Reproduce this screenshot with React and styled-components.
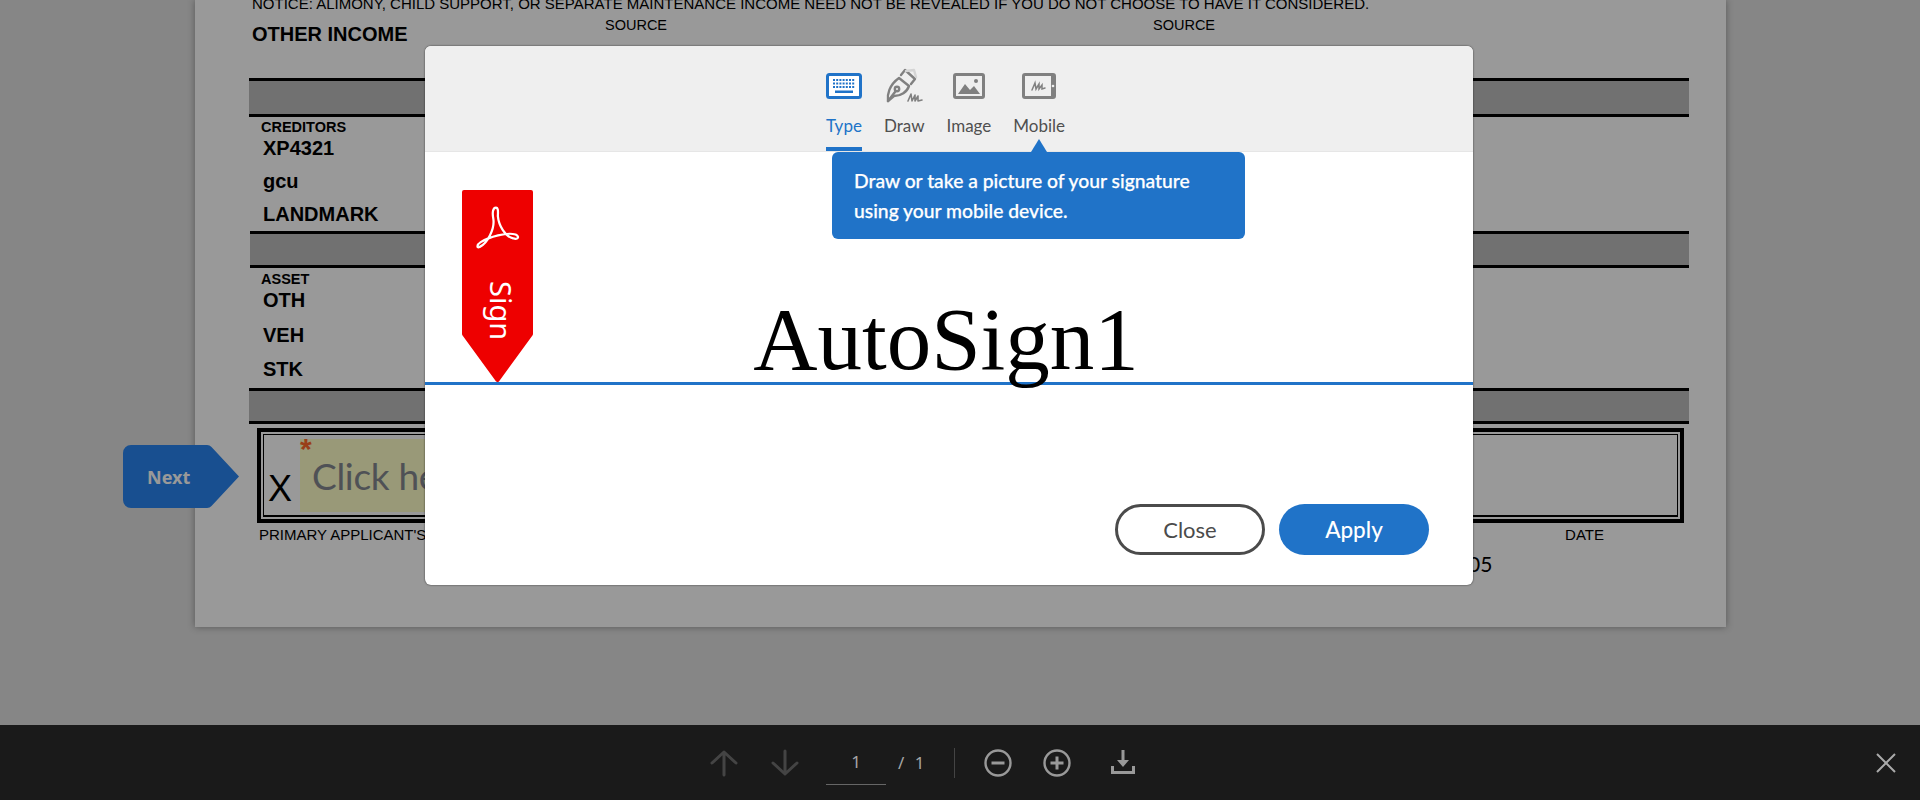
import React from 'react';
import styled, { createGlobalStyle } from 'styled-components';

const GlobalStyle = createGlobalStyle`
    html, body { margin: 0; padding: 0; height: 100%; overflow: hidden; }
    body { font-family: "Liberation Sans", Arial, sans-serif; }
    * { box-sizing: border-box; }
`;

const Screen = styled.div`
    display: flex;
    flex-direction: column;
    width: 1920px;
    height: 800px;
    overflow: hidden;
`;

const Viewer = styled.div`
    position: relative;
    flex: 1;
    padding-left: 195px;
    background: #dfdfdf;
    overflow: hidden;
`;

const Backdrop = styled.div`
    position: absolute;
    inset: 0;
    background: rgba(0, 0, 0, 0.4);
`;

/* pdf page */
const Page = styled.div`
    width: 1531px;
    height: 627px;
    padding: 0 37px 0 54px;
    background: #fff;
    box-shadow: 0 0 7px rgba(0, 0, 0, 0.35);
    color: #000;
    overflow: hidden;
`;

const Notice = styled.div`
    height: 10px;
    margin: -3px 0 0 3px;
    font-size: 15px;
    line-height: 14px;
    white-space: nowrap;
`;

const IncomeRow = styled.div`
    display: grid;
    grid-template-columns: 353px 548px 1fr;
    height: 71px;
    margin-left: 3px;
    padding-top: 10px;
`;

const IncomeTitle = styled.div`
    margin-top: 5px;
    font-size: 20px;
    font-weight: 700;
    line-height: 24px;
`;

const SourceLabel = styled.div`
    font-size: 14.5px;
    line-height: 16px;
`;

const Bar = styled.div`
    height: ${(p) => p.$height}px;
    margin-left: ${(p) => p.$inset || 0}px;
    background: #bcbcbc;
    border-top: 3px solid #000;
    border-bottom: 3px solid #000;
`;

const ListLabel = styled.div`
    height: ${(p) => p.$height}px;
    padding: ${(p) => p.$top}px 0 0 12px;
    font-size: 14.5px;
    font-weight: 700;
    line-height: 12px;
`;

const ListItems = styled.div`
    height: ${(p) => p.$height}px;
`;

const ListItem = styled.div`
    height: ${(p) => p.$height}px;
    padding-left: 14px;
    font-size: 20px;
    font-weight: 700;
    line-height: ${(p) => p.$height}px;
`;

const SignBox = styled.div`
    height: 95px;
    margin: 4px 5px 0 8px;
    padding: 2px;
    border: 4px solid #000;
`;

const SignBoxInner = styled.div`
    display: flex;
    height: 100%;
    padding: 4px 0 3px 4px;
    border: 1px solid #000;
    border-bottom-width: 2px;
`;

const SignX = styled.div`
    align-self: flex-end;
    width: 32px;
    margin-bottom: 2px;
    font-size: 36px;
    line-height: 42px;
`;

const SignField = styled.div`
    position: relative;
    flex: 0 0 900px;
    padding-left: 12px;
    background: #ffffc8;
    color: #84888f;
    font-family: Lato, sans-serif;
    font-size: 37px;
    letter-spacing: -0.3px;
    line-height: 74px;
`;

const Required = styled.span`
    position: absolute;
    top: -5px;
    left: 0;
    color: #ff6a2a;
    font-family: "Liberation Sans", sans-serif;
    font-size: 30px;
    font-weight: 700;
    line-height: 30px;
`;

const CaptionRow = styled.div`
    display: flex;
    justify-content: space-between;
    margin-top: 4px;
    padding: 0 85px 0 10px;
    font-size: 15px;
    line-height: 16px;
`;

const DateValue = styled.div`
    margin: 8px 0 0 1219px;
    font-family: Lato, sans-serif;
    font-size: 21px;
    line-height: 26px;
`;

/* next tag */
const NextTag = styled.div`
    position: absolute;
    top: 445px;
    left: 123px;
    display: flex;
    align-items: center;
    width: 117px;
    height: 63px;
    padding-left: 24px;
    color: #fff;
    font-family: "Noto Sans", sans-serif;
    font-size: 18px;
    font-weight: 700;

    svg {
        position: absolute;
        inset: 0;
    }
`;

const NextText = styled.span`
    position: relative;
`;

/* signature dialog */
const Dialog = styled.div`
    position: absolute;
    top: 46px;
    left: 425px;
    display: flex;
    flex-direction: column;
    width: 1048px;
    height: 539px;
    background: #fff;
    border-radius: 6px;
    box-shadow: 0 0 2px rgba(0, 0, 0, 0.7);
    font-family: Lato, sans-serif;
`;

const DialogHeader = styled.div`
    display: flex;
    justify-content: center;
    gap: 22px;
    height: 106px;
    padding: 22px 7px 0 0;
    background: #efefef;
    border-radius: 6px 6px 0 0;
    border-bottom: 1px solid #e6e6e6;
`;

const Tab = styled.div`
    display: flex;
    flex-direction: column;
    align-items: center;
    height: 83px;
    border-bottom: 4px solid ${(p) => (p.$active ? '#2073c8' : 'transparent')};
    color: ${(p) => (p.$active ? '#2073c8' : '#505050')};
    font-size: 17px;
    line-height: 22px;
`;

const TabIcon = styled.div`
    display: flex;
    align-items: center;
    justify-content: center;
    height: 36px;
    margin-bottom: 11px;
`;

const Tooltip = styled.div`
    position: absolute;
    top: 106px;
    left: 407px;
    width: 413px;
    height: 87px;
    padding: 14px 0 0 22px;
    background: #2073c8;
    border-radius: 6px;
    color: #fff;
    font-size: 19.3px;
    font-weight: 500;
    line-height: 30px;
    -webkit-text-stroke: 0.25px #fff;

    &:before {
        content: '';
        position: absolute;
        top: -13px;
        left: 199px;
        border-left: 8px solid transparent;
        border-right: 8px solid transparent;
        border-bottom: 13px solid #2073c8;
    }
`;

const SignArea = styled.div`
    position: relative;
    display: flex;
    justify-content: center;
    align-items: flex-end;
    height: 233px;
    padding-right: 6px;
    border-bottom: 3px solid #2073c8;
`;

const SignedName = styled.div`
    margin-bottom: -2px;
    color: #000;
    font-family: "Liberation Serif", serif;
    font-size: 89px;
    line-height: 89px;
`;

const SignRibbon = styled.div`
    position: absolute;
    top: 38px;
    left: 37px;
    width: 71px;
    height: 192px;

    > svg:first-child {
        position: absolute;
        inset: 0;
    }
`;

const RibbonLogo = styled.svg`
    position: absolute;
    top: 15px;
    left: 13px;
`;

const RibbonText = styled.span`
    position: absolute;
    top: 91px;
    left: 20px;
    color: #fff;
    font-family: "Noto Sans", sans-serif;
    font-size: 29px;
    line-height: 38px;
    writing-mode: vertical-rl;
`;

const DialogFooter = styled.div`
    display: flex;
    justify-content: flex-end;
    align-items: flex-end;
    gap: 14px;
    flex: 1;
    padding: 0 44px 30px 0;
`;

const PillButton = styled.button`
    width: 150px;
    height: 51px;
    padding: 0;
    background: ${(p) => (p.$primary ? '#2073c8' : '#fff')};
    border: ${(p) => (p.$primary ? 'none' : '3px solid #4b4b4b')};
    border-radius: 26px;
    color: ${(p) => (p.$primary ? '#fff' : '#4b4b4b')};
    font-family: Lato, sans-serif;
    font-size: ${(p) => (p.$primary ? 22.5 : 22)}px;
    font-weight: ${(p) => (p.$primary ? 500 : 400)};
`;

/* bottom toolbar */
const Toolbar = styled.div`
    display: flex;
    align-items: center;
    flex: 0 0 75px;
    padding: 0 23px 0 710px;
    background: #1a1a1a;
    color: #999;
`;

const ToolIcon = styled.svg`
    display: block;
    margin-right: ${(p) => p.$gap}px;
    flex: none;
`;

const PageInput = styled.div`
    width: 60px;
    height: 44px;
    margin-top: 1px;
    border-bottom: 1px solid #666;
    color: #a6a6a6;
    font-family: "Noto Sans", sans-serif;
    font-size: 17px;
    line-height: 42px;
    text-align: center;
`;

const PageCount = styled.div`
    width: 68px;
    padding-left: 12px;
    color: #a6a6a6;
    font-family: "Noto Sans", sans-serif;
    font-size: 17px;
    word-spacing: 6px;
`;

const ToolDivider = styled.div`
    width: 1px;
    height: 30px;
    margin-right: 29px;
    background: #444;
`;

const ToolSpacer = styled.div`
    flex: 1;
`;

const KeyboardIcon = () => (
    <svg width="36" height="26" viewBox="0 0 36 26">
        <rect x="1.500" y="1.500" width="33" height="23" rx="2" fill="#fff" stroke="#2073c8" strokeWidth="3" />
        <path d="M7 7h22M7 10.500h22M7 14h22" stroke="#2073c8" strokeWidth="2" strokeDasharray="2 1.2" />
        <rect x="9" y="17.500" width="18" height="2.500" fill="#2073c8" />
    </svg>
);

const PenIcon = () => (
    <svg width="38" height="36" viewBox="0 0 38 36" fill="none" stroke="#808080" strokeWidth="2.4" strokeLinecap="round" strokeLinejoin="round">
        <path d="M14 10 L24 18 C22 24 16 28 9 28 L3 33 C2 27 4 17 14 10Z" />
        <path d="M3 33 L10 24" />
        <circle cx="12" cy="21" r="2.2" />
        <path d="M16 7 L20 2 L30 11 L26 16" />
        <path d="M21 3 L29 2 L31 9" stroke="#d4d4d4" />
        <path d="M23 33 L26 26 L27 33 L30 27 L30 33 L33 28 L33 33 L37 32" strokeWidth="1.6" />
    </svg>
);

const ImageIcon = () => (
    <svg width="32" height="26" viewBox="0 0 32 26">
        <rect x="1.500" y="1.500" width="29" height="23" rx="1.500" fill="none" stroke="#808080" strokeWidth="3" />
        <path d="M5 21 L12 11 L17 17 L21 13 L27 21Z" fill="#808080" />
        <circle cx="23" cy="8" r="2" fill="#808080" />
    </svg>
);

const MobileIcon = () => (
    <svg width="34" height="26" viewBox="0 0 34 26">
        <rect x="1.500" y="1.500" width="31" height="23" rx="1.500" fill="none" stroke="#808080" strokeWidth="3" />
        <rect x="29" y="2" width="4" height="22" fill="#808080" />
        <circle cx="31" cy="13" r="1.300" fill="#efefef" />
        <path d="M10 17 L13 10 L14 16 L17 11 L17 16 L20 12 L20 16 L23 15" fill="none" stroke="#808080" strokeWidth="1.500" strokeLinecap="round" />
    </svg>
);

const tabs = [
    { name: 'Type', icon: <KeyboardIcon />, active: true },
    { name: 'Draw', icon: <PenIcon /> },
    { name: 'Image', icon: <ImageIcon /> },
    { name: 'Mobile', icon: <MobileIcon /> }
];

const creditors = ['XP4321', 'gcu', 'LANDMARK'];
const assets = ['OTH', 'VEH', 'STK'];

export default () => {
    return (
        <Screen>
            <GlobalStyle />
            <Viewer>
                <Page>
                    <Notice>NOTICE: ALIMONY, CHILD SUPPORT, OR SEPARATE MAINTENANCE INCOME NEED NOT BE REVEALED IF YOU DO NOT CHOOSE TO HAVE IT CONSIDERED.</Notice>
                    <IncomeRow>
                        <IncomeTitle>OTHER INCOME</IncomeTitle>
                        <SourceLabel>SOURCE</SourceLabel>
                        <SourceLabel>SOURCE</SourceLabel>
                    </IncomeRow>
                    <Bar $height={39} />
                    <ListLabel $height={15} $top={4}>CREDITORS</ListLabel>
                    <ListItems $height={99}>
                        {creditors.map((name) => (
                            <ListItem key={name} $height={33}>{name}</ListItem>
                        ))}
                    </ListItems>
                    <Bar $height={37} $inset={1} />
                    <ListLabel $height={15} $top={5}>ASSET</ListLabel>
                    <ListItems $height={105}>
                        {assets.map((name) => (
                            <ListItem key={name} $height={34.5}>{name}</ListItem>
                        ))}
                    </ListItems>
                    <Bar $height={36} />
                    <SignBox>
                        <SignBoxInner>
                            <SignX>X</SignX>
                            <SignField>
                                <Required>*</Required>
                                Click here to sign
                            </SignField>
                        </SignBoxInner>
                    </SignBox>
                    <CaptionRow>
                        <span>PRIMARY APPLICANT'S SIGNATURE</span>
                        <span>DATE</span>
                    </CaptionRow>
                    <DateValue>05</DateValue>
                </Page>
                <NextTag>
                    <svg width="117" height="63" viewBox="0 0 117 63">
                        <path d="M8 0H84a6 6 0 0 1 4.500 2L116 31.500 88.500 61a6 6 0 0 1-4.500 2H8a8 8 0 0 1-8-8V8a8 8 0 0 1 8-8Z" fill="#2884f0" />
                    </svg>
                    <NextText>Next</NextText>
                </NextTag>
                <Backdrop />
                <Dialog>
                    <DialogHeader>
                        {tabs.map((tab) => (
                            <Tab key={tab.name} $active={tab.active}>
                                <TabIcon>{tab.icon}</TabIcon>
                                {tab.name}
                            </Tab>
                        ))}
                    </DialogHeader>
                    <SignArea>
                        <SignedName>AutoSign1</SignedName>
                        <SignRibbon>
                            <svg width="71" height="192" viewBox="0 0 71 192">
                                <path d="M2 2H69V144L35.500 190L2 144Z" fill="#ee0000" stroke="#ee0000" strokeWidth="4" strokeLinejoin="round" />
                            </svg>
                            <RibbonLogo width="46" height="46" viewBox="160 105 145 145">
                                <path d="M226 113C216 113 214 130 218 150C222 180 200 225 175 237C165 243 165 230 178 222C205 205 260 190 288 198C302 205 295 215 280 210C255 205 235 170 232 140C233 125 233 113 226 113Z" fill="none" stroke="#fff" strokeWidth="7" />
                            </RibbonLogo>
                            <RibbonText>Sign</RibbonText>
                        </SignRibbon>
                    </SignArea>
                    <Tooltip>
                        Draw or take a picture of your signature<br />
                        using your mobile device.
                    </Tooltip>
                    <DialogFooter>
                        <PillButton>Close</PillButton>
                        <PillButton $primary>Apply</PillButton>
                    </DialogFooter>
                </Dialog>
            </Viewer>
            <Toolbar>
                <ToolIcon $gap={33} width="28" height="28" viewBox="0 0 28 28" fill="none" stroke="#444" strokeWidth="3" strokeLinecap="round" strokeLinejoin="round">
                    <path d="M14 26V3M2 14L14 3L26 14" />
                </ToolIcon>
                <ToolIcon $gap={27} width="28" height="28" viewBox="0 0 28 28" fill="none" stroke="#444" strokeWidth="3" strokeLinecap="round" strokeLinejoin="round">
                    <path d="M14 2V25M2 14L14 25L26 14" />
                </ToolIcon>
                <PageInput>1</PageInput>
                <PageCount>/ 1</PageCount>
                <ToolDivider />
                <ToolIcon $gap={31} width="28" height="28" viewBox="0 0 28 28" fill="none" stroke="#999" strokeWidth="2.4">
                    <circle cx="14" cy="14" r="12.500" />
                    <path d="M7.500 14H20.500" strokeWidth="3" />
                </ToolIcon>
                <ToolIcon $gap={39} width="28" height="28" viewBox="0 0 28 28" fill="none" stroke="#999" strokeWidth="2.4">
                    <circle cx="14" cy="14" r="12.500" />
                    <path d="M7.500 14H20.500M14 7.500V20.500" strokeWidth="3" />
                </ToolIcon>
                <ToolIcon $gap={0} width="26" height="26" viewBox="0 0 26 26" fill="#999">
                    <path d="M11.500 0H14.500V10H19L13 17L7 10H11.500Z" />
                    <path d="M1 16H4V21H22V16H25V24H1Z" />
                </ToolIcon>
                <ToolSpacer />
                <ToolIcon $gap={0} width="22" height="22" viewBox="0 0 22 22" fill="none" stroke="#aaa" strokeWidth="2">
                    <path d="M2 2L20 20M20 2L2 20" />
                </ToolIcon>
            </Toolbar>
        </Screen>
    );
};
